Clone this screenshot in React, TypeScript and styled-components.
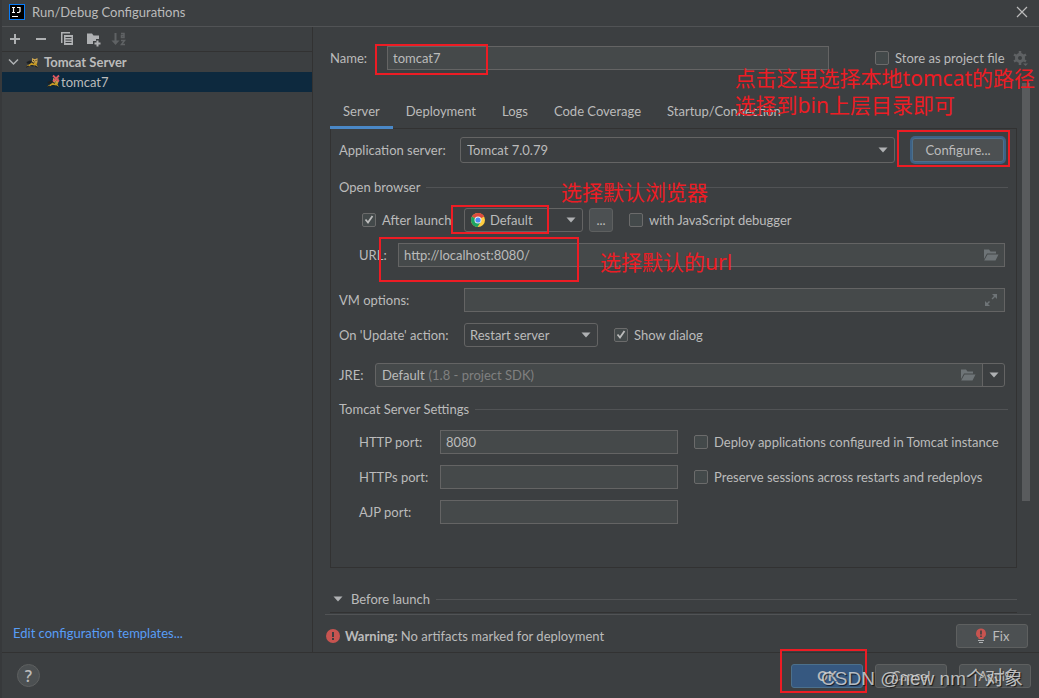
import React from "react";
import styled, { createGlobalStyle } from "styled-components";

const FONT = `Lato, "Noto Sans CJK SC", sans-serif`;
const c = {
  bg: "#3c3f41",
  dark: "#323232",
  line: "#515355",
  field: "#45494a",
  border: "#646464",
  text: "#bbbbbb",
  icon: "#afb1b3",
  red: "#ed1c24",
};

const GlobalStyle = createGlobalStyle`
  *, *::before, *::after { box-sizing: border-box; }
  body { margin: 0; background: ${c.bg}; }
  body, button, input, select { font-family: ${FONT}; font-size: 13px; line-height: 18px; color: ${c.text}; }
`;

const Dialog = styled.div`
  display: flex;
  flex-direction: column;
  min-height: 100vh;
  background: ${c.bg};
  border-left: 2px solid #37393b;
  border-bottom: 1px solid #2f2b2d;
`;
const TitleBar = styled.header`
  display: flex;
  align-items: center;
  gap: 7px;
  height: 27px;
  padding: 0 9px 2px 7px;
  border-bottom: 1px solid #515355;
`;
const Title = styled.h1`
  flex: 1;
  margin: 0;
  font-size: 13px;
  font-weight: 400;
`;
const IconButton = styled.button<{ $dim?: boolean }>`
  display: flex;
  align-items: center;
  justify-content: center;
  width: 16px;
  height: 16px;
  padding: 0;
  border: 0;
  background: none;
  color: ${(p) => (p.$dim ? "#5f6264" : c.icon)};
`;
const Body = styled.div`
  display: grid;
  grid-template-columns: 311px minmax(0, 1fr);
  flex: 1;
`;
const Sidebar = styled.aside`
  display: flex;
  flex-direction: column;
  border-right: 1px solid ${c.dark};
`;
const Toolbar = styled.div`
  display: flex;
  align-items: center;
  gap: 10px;
  height: 25px;
  padding: 0 5px;
  border-bottom: 1px solid ${c.dark};
`;
const Tree = styled.ul`
  flex: 1;
  margin: 0;
  padding: 0;
  list-style: none;
`;
const TreeRow = styled.li<{ $depth: number; $selected?: boolean }>`
  display: flex;
  align-items: center;
  height: 20px;
  padding-left: ${(p) => (p.$depth ? 43 : 5)}px;
  padding-bottom: 1px;
  gap: ${(p) => (p.$depth ? 0 : 4)}px;
  font-weight: ${(p) => (p.$depth ? 400 : 700)};
  background: ${(p) => (p.$selected ? "#0d293e" : "transparent")};
`;
const TemplatesLink = styled.a`
  padding: 0 0 10px 11px;
  color: #589df6;
  text-decoration: none;
`;

const Main = styled.main`
  display: flex;
  flex-direction: column;
`;
const NameRow = styled.div`
  position: relative;
  display: flex;
  align-items: center;
  padding: 19px 11px 0 17px;
`;
const Label = styled.label<{ $w: number }>`
  flex: none;
  width: ${(p) => p.$w}px;
  white-space: nowrap;
`;
const Anchor = styled.div<{ $w?: number }>`
  position: relative;
  display: flex;
  flex: ${(p) => (p.$w ? `0 0 ${p.$w}px` : "1 1 0")};
  min-width: 0;
`;
const TextInput = styled.input`
  flex: 1;
  width: 100%;
  min-width: 0;
  height: 24px;
  padding: 0 5px 1px;
  border: 1px solid ${c.border};
  border-radius: 0;
  background: ${c.field};
  outline: 0;
`;
const FieldIcon = styled.span<{ $right: number }>`
  position: absolute;
  right: ${(p) => p.$right}px;
  top: 0;
  bottom: 0;
  display: flex;
  align-items: center;
  pointer-events: none;
  color: #6e7477;
`;
const Check = styled.label<{ $w?: number; $before?: number }>`
  display: flex;
  align-items: center;
  flex: none;
  gap: 6px;
  width: ${(p) => (p.$w ? `${p.$w}px` : "auto")};
  margin-left: ${(p) => p.$before || 0}px;
  white-space: nowrap;
`;
const CheckInput = styled.input`
  appearance: none;
  flex: none;
  width: 14px;
  height: 14px;
  margin: 0;
  border: 1px solid #6b6b6b;
  border-radius: 2px;
  background: #43494a;
  &:checked {
    background: #43494a
      url("data:image/svg+xml,%3Csvg xmlns='http://www.w3.org/2000/svg' viewBox='0 0 12 12'%3E%3Cpath d='M2.5 5.5L5 8.5L9.5 2' fill='none' stroke='%23bbbbbb' stroke-width='1.8'/%3E%3C/svg%3E")
      center / 12px 12px no-repeat;
  }
`;
const Scroller = styled.div`
  display: flex;
  padding: 0 9px 0 17px;
  gap: 5px;
  flex: 1;
`;
const Content = styled.div`
  flex: 1;
  min-width: 0;
  border-bottom: 1px solid ${c.dark};
`;
const Track = styled.div`
  display: flex;
  flex-direction: column;
  width: 8px;
  padding-top: 13px;
  &::before { content: ""; flex: 418; background: #595b5d; }
  &::after { content: ""; flex: 112; }
`;
const Tabs = styled.div`
  display: flex;
  margin-top: 27px;
  box-shadow: inset 0 -1px 0 ${c.dark};
`;
const Tab = styled.button<{ $active?: boolean }>`
  height: 32px;
  padding: 0 13px 1px;
  border: 0;
  border-bottom: 3px solid ${(p) => (p.$active ? "#4a88c7" : "transparent")};
  background: none;
  white-space: nowrap;
`;
const Panel = styled.section`
  padding: 8px 8px 43px;
  border: solid ${c.dark};
  border-width: 0 1px 1px;
`;
const Row = styled.div<{ $top: number; $indent?: number }>`
  display: flex;
  align-items: center;
  margin-top: ${(p) => p.$top}px;
  padding: 0 3px 0 ${(p) => p.$indent || 0}px;
`;
const SectionTitle = styled.h2<{ $top: number }>`
  display: flex;
  align-items: center;
  gap: 6px;
  margin: ${(p) => p.$top}px 0 0;
  font-size: 13px;
  font-weight: 400;
  white-space: nowrap;
  &::after { content: ""; flex: 1; height: 1px; background: ${c.line}; }
`;
const Select = styled.select<{ $h?: number; $pad?: number }>`
  appearance: none;
  flex: 1;
  width: 100%;
  min-width: 0;
  height: ${(p) => p.$h || 24}px;
  padding: 0 24px 0 ${(p) => p.$pad || 5}px;
  border: 1px solid ${c.border};
  border-radius: 3px;
  background: ${c.bg};
  outline: 0;
`;
const Combo = styled.div`
  position: relative;
  display: flex;
  flex: 1;
  height: 24px;
  border: 1px solid ${c.border};
  border-radius: 3px;
  background: ${c.field};
`;
const ComboText = styled.button`
  display: flex;
  flex: 1;
  gap: 4px;
  align-items: center;
  padding: 0 6px 1px;
  border: 0;
  background: none;
  color: ${c.text};
  span { color: #808080; }
`;
const ComboArrow = styled.button`
  display: flex;
  align-items: center;
  justify-content: center;
  width: 22px;
  padding: 0;
  border: 0;
  border-left: 1px solid ${c.border};
  border-radius: 0 3px 3px 0;
  background: ${c.bg};
`;
const Button = styled.button<{ $w: number; $kind?: "primary" | "focus" }>`
  display: flex;
  align-items: center;
  justify-content: center;
  gap: 6px;
  flex: none;
  width: ${(p) => p.$w}px;
  height: 24px;
  padding: 0;
  border: 1px solid ${(p) => (p.$kind ? "#4c708c" : "#5e6060")};
  border-radius: 3px;
  background: ${(p) => (p.$kind === "primary" ? "#365880" : "#4c5052")};
  box-shadow: ${(p) => (p.$kind === "focus" ? "0 0 0 2px #3d6185" : "none")};
  font-weight: ${(p) => (p.$kind === "primary" ? 700 : 400)};
`;
const MoreButton = styled(Button)`
  margin: 0 16px 0 6px;
`;
const ConfigureSlot = styled(Anchor)`
  justify-content: flex-end;
  padding-right: 1px;
`;
const BeforeLaunch = styled.div`
  display: flex;
  align-items: center;
  gap: 8px;
  padding: 22px 0 4px 3px;
  h2 { flex: 1; margin-top: 0; }
`;
const Warning = styled.div`
  display: flex;
  align-items: center;
  gap: 5px;
  height: 38px;
  margin: 1px 8px 0 12px;
  padding: 5px 3px 0 1px;
  border-top: 1px solid ${c.line};
  p { flex: 1; margin: 0; }
`;
const Footer = styled.footer`
  position: relative;
  display: flex;
  align-items: center;
  gap: 12px;
  height: 46px;
  padding: 0 8px 0 15px;
  border-top: 1px solid ${c.dark};
`;
const HelpButton = styled.button`
  width: 23px;
  height: 23px;
  margin-right: auto;
  padding: 0;
  border: 1px solid #5e6060;
  border-radius: 50%;
  background: #4c5052;
  font-family: "Open Sans", sans-serif;
  font-size: 16px;
  font-weight: 600;
  line-height: 20px;
`;
const Mark = styled.span<{ $x: number; $y: number; $w: number; $h: number }>`
  position: absolute;
  z-index: 2;
  left: ${(p) => p.$x}px;
  top: ${(p) => p.$y}px;
  width: ${(p) => p.$w}px;
  height: ${(p) => p.$h}px;
  border: 2px solid ${c.red};
  pointer-events: none;
`;
const Note = styled.span<{ $x?: number; $right?: number; $y: number }>`
  position: absolute;
  z-index: 2;
  left: ${(p) => (p.$x === undefined ? "auto" : `${p.$x}px`)};
  right: ${(p) => (p.$right === undefined ? "auto" : `${p.$right}px`)};
  top: ${(p) => p.$y}px;
  font-family: "Noto Sans", "Noto Sans CJK SC", sans-serif;
  font-size: 21px;
  line-height: 27px;
  color: ${c.red};
  white-space: nowrap;
  pointer-events: none;
`;
const Watermark = styled.span`
  position: absolute;
  z-index: 3;
  right: 16px;
  top: 12px;
  font-family: "Liberation Sans", "Noto Sans CJK SC", sans-serif;
  font-size: 19px;
  line-height: 28px;
  color: rgba(225, 225, 225, 0.8);
  text-shadow: 1px 1px 1px rgba(0, 0, 0, 0.7);
  white-space: nowrap;
  pointer-events: none;
`;

const Arrow = () => (
  <svg width="10" height="6" viewBox="0 0 10 6"><path d="M0.5 0.5h9L5 5.5z" fill="#afb1b3" /></svg>
);
const Folder = () => (
  <svg width="16" height="12" viewBox="0 0 16 12" fill="currentColor">
    <path d="M1 0.500h5l1.500 2H13v2H4L1 10z" /><path d="M4.500 5.500H15.500L12.500 11.500H1.200z" />
  </svg>
);
const Cat = ({ error }: { error?: boolean }) => (
  <svg width="16" height="16" viewBox="0 0 16 16">
    <path d="M2.500 8L6 6.500 8 7.500 6 10 3 9.500z" fill="#1d2023" />
    <path d="M2 12.500L5 10.500 8 8.500l3-1 2.500 1-1 2 1.500 2.500-2.500-1.500-3-0.500-3 1z" fill="#c99b22" />
    <path d="M8 4l2 1h1.500L13.500 4v4L12 9H9.500L8 7.500z" fill="#c9a452" />
    <path d="M6.500 11.500l3 0.500M2 13.200l3-1.200M11 12l2.500 1.300M8 8.500l2 0.800" stroke="#1d2023" strokeWidth="1" />
    <path d="M9 6.500h1M11.500 6.500h1M10.200 8h1" stroke="#54421a" strokeWidth="1" />
    {error && <path d="M8 1.500l6 6M14 1.500l-6 6" stroke="#db5860" strokeWidth="1.800" />}
  </svg>
);
const Chrome = () => (
  <svg width="14" height="14" viewBox="0 0 14 14">
    <circle cx="7" cy="7" r="7" fill="#ffcd40" />
    <path d="M7 7L0.940 3.500A7 7 0 0 1 13.060 3.500z" fill="#dd4b3e" />
    <path d="M7 3.500h6.060A7 7 0 0 0 7 0z" fill="#dd4b3e" />
    <path d="M0.940 3.500A7 7 0 0 0 6.500 14L10 8.700 7 7z" fill="#1da462" />
    <circle cx="7" cy="7" r="3.500" fill="#f1f1f1" />
    <circle cx="7" cy="7" r="2.600" fill="#4c8bf5" />
  </svg>
);

const ports = [
  { id: "http", label: "HTTP port:", value: "8080", check: "Deploy applications configured in Tomcat instance" },
  { id: "https", label: "HTTPs port:", value: "", check: "Preserve sessions across restarts and redeploys" },
  { id: "ajp", label: "AJP port:", value: "", check: "" },
];

export default function App() {
  return (
    <Dialog role="dialog" aria-label="Run/Debug Configurations">
      <GlobalStyle />
      <TitleBar>
        <svg width="16" height="16" viewBox="0 0 16 16">
          <rect x="0.500" y="0.500" width="15" height="15" fill="#000" stroke="#087cfa" />
          <path d="M3 3.500h3M4.500 3.500v5M3 8.500h3M8 3.500h3v4l-1 1H8" fill="none" stroke="#fff" strokeWidth="1.200" />
          <path d="M3 12.500h6" stroke="#fff" />
        </svg>
        <Title>Run/Debug Configurations</Title>
        <IconButton aria-label="Close">
          <svg width="12" height="12" viewBox="0 0 12 12"><path d="M1 1l10 10M11 1L1 11" stroke="#bbb" strokeWidth="1.200" /></svg>
        </IconButton>
      </TitleBar>
      <Body>
        <Sidebar>
          <Toolbar>
            <IconButton aria-label="Add">
              <svg width="16" height="16" viewBox="0 0 16 16" stroke="currentColor" strokeWidth="2"><path d="M8 3v10M3 8h10" /></svg>
            </IconButton>
            <IconButton aria-label="Remove">
              <svg width="16" height="16" viewBox="0 0 16 16" stroke="currentColor" strokeWidth="2"><path d="M3 8h10" /></svg>
            </IconButton>
            <IconButton aria-label="Copy">
              <svg width="16" height="16" viewBox="0 0 16 16">
                <path d="M2 1h9v1.500H3.500V12H2z" fill="currentColor" /><path d="M5 4h9v10H5z" fill="currentColor" />
                <path d="M6.500 6.500h6M6.500 9h6M6.500 11.500h6" stroke="#3c3f41" />
              </svg>
            </IconButton>
            <IconButton aria-label="New folder">
              <svg width="16" height="16" viewBox="0 0 16 16">
                <path d="M2 2.500h5l1.500 2H14V8h-3v2H8v3H2z" fill="currentColor" />
                <path d="M12.500 9.500v6M9.500 12.500h6" stroke="currentColor" strokeWidth="2" />
              </svg>
            </IconButton>
            <IconButton aria-label="Sort configurations" $dim>
              <svg width="16" height="16" viewBox="0 0 16 16" fill="none" stroke="currentColor" strokeWidth="1.500">
                <path d="M4.500 2v9" strokeWidth="2" /><path d="M0.500 9.500h8L4.500 14z" fill="currentColor" stroke="none" />
                <path d="M10 2.500h3v4h-2.500v-2H13M10 9.500h3.500L10.500 13.500H14" />
              </svg>
            </IconButton>
          </Toolbar>
          <Tree>
            <TreeRow $depth={0}>
              <svg width="13" height="10" viewBox="0 0 13 10"><path d="M2 2.500l4.500 4.500L11 2.500" fill="none" stroke="#afb1b3" strokeWidth="1.500" /></svg>
              <Cat />
              Tomcat Server
            </TreeRow>
            <TreeRow $depth={1} $selected>
              <Cat error />
              tomcat7
            </TreeRow>
          </Tree>
          <TemplatesLink href="#templates">Edit configuration templates...</TemplatesLink>
        </Sidebar>

        <Main>
          <NameRow>
            <Label $w={57} htmlFor="name">Name:</Label>
            <Anchor>
              <TextInput id="name" defaultValue="tomcat7" />
              <Mark $x={-12} $y={-2} $w={113} $h={31} />
            </Anchor>
            <Check $w={137} $before={46}>
              <CheckInput type="checkbox" />
              Store as project file
            </Check>
            <IconButton aria-label="Storage options" $dim>
              <svg width="16" height="16" viewBox="0 0 16 16">
                <circle cx="8" cy="8" r="3.500" fill="none" stroke="currentColor" strokeWidth="3" />
                <path d="M8 1v14M2 4.500l12 7M14 4.500l-12 7" stroke="currentColor" strokeWidth="2.500" />
                <circle cx="8" cy="8" r="2" fill="#3c3f41" />
                <path d="M11 13.500h5L13.500 16z" fill="currentColor" />
              </svg>
            </IconButton>
            <Note $right={4} $y={38}>
              点击这里选择本地tomcat的路径
              <br />
              选择到bin上层目录即可
            </Note>
          </NameRow>
          <Scroller>
            <Content>
              <Tabs role="tablist">
                <Tab role="tab" $active aria-selected>Server</Tab>
                <Tab role="tab">Deployment</Tab>
                <Tab role="tab">Logs</Tab>
                <Tab role="tab">Code Coverage</Tab>
                <Tab role="tab">Startup/Connection</Tab>
              </Tabs>
              <Panel>
                <Row $top={0}>
                  <Label $w={121} htmlFor="server">Application server:</Label>
                  <Anchor>
                    <Select id="server" $h={26} $pad={6}><option>Tomcat 7.0.79</option></Select>
                    <FieldIcon $right={7}><Arrow /></FieldIcon>
                  </Anchor>
                  <ConfigureSlot $w={110}>
                    <Button $w={92} $kind="focus">Configure...</Button>
                    <Mark $x={2} $y={-8} $w={113} $h={37} />
                  </ConfigureSlot>
                </Row>
                <SectionTitle $top={15}>Open browser</SectionTitle>
                <Row $top={12} $indent={23}>
                  <Check $w={102}>
                    <CheckInput type="checkbox" defaultChecked />
                    After launch
                  </Check>
                  <Anchor $w={119}>
                    <Select aria-label="Browser" $pad={25}><option>Default</option></Select>
                    <FieldIcon $right={98}><Chrome /></FieldIcon>
                    <FieldIcon $right={7}><Arrow /></FieldIcon>
                    <Mark $x={-13} $y={-3} $w={98} $h={29} />
                    <Note $x={97} $y={-29}>选择默认浏览器</Note>
                  </Anchor>
                  <MoreButton $w={24}>...</MoreButton>
                  <Check>
                    <CheckInput type="checkbox" />
                    with JavaScript debugger
                  </Check>
                </Row>
                <Row $top={11} $indent={20}>
                  <Label $w={39} htmlFor="url">URL:</Label>
                  <Anchor>
                    <TextInput id="url" defaultValue="http://localhost:8080/" />
                    <FieldIcon $right={6}><Folder /></FieldIcon>
                    <Mark $x={-19} $y={-6} $w={200} $h={45} />
                    <Note $x={202} $y={6}>选择默认的url</Note>
                  </Anchor>
                </Row>
                <Row $top={21}>
                  <Label $w={125} htmlFor="vm">VM options:</Label>
                  <Anchor>
                    <TextInput id="vm" />
                    <FieldIcon $right={7}>
                      <svg width="14" height="14" viewBox="0 0 14 14" fill="currentColor">
                        <path d="M8 1h5v5l-2-2-2.500 2.500-1-1L10 3zM1 8v5h5l-2-2 2-2-1-1-2 2z" />
                      </svg>
                    </FieldIcon>
                  </Anchor>
                </Row>
                <Row $top={11}>
                  <Label $w={125} htmlFor="update">On 'Update' action:</Label>
                  <Anchor $w={134}>
                    <Select id="update"><option>Restart server</option></Select>
                    <FieldIcon $right={7}><Arrow /></FieldIcon>
                  </Anchor>
                  <Check $before={16}>
                    <CheckInput type="checkbox" defaultChecked />
                    Show dialog
                  </Check>
                </Row>
                <Row $top={16}>
                  <Label $w={36} htmlFor="jre">JRE:</Label>
                  <Combo>
                    <ComboText id="jre">Default <span>(1.8 - project SDK)</span></ComboText>
                    <FieldIcon $right={28}><Folder /></FieldIcon>
                    <ComboArrow aria-label="Choose JRE"><Arrow /></ComboArrow>
                  </Combo>
                </Row>
                <SectionTitle $top={13}>Tomcat Server Settings</SectionTitle>
                {ports.map((p, i) => (
                  <Row key={p.id} $top={i ? 11 : 12} $indent={20}>
                    <Label $w={81} htmlFor={p.id}>{p.label}</Label>
                    <Anchor $w={238}><TextInput id={p.id} defaultValue={p.value} /></Anchor>
                    {p.check && (
                      <Check $before={16}>
                        <CheckInput type="checkbox" />
                        {p.check}
                      </Check>
                    )}
                  </Row>
                ))}
              </Panel>
              <BeforeLaunch>
                <Arrow />
                <SectionTitle $top={0}>Before launch</SectionTitle>
              </BeforeLaunch>
            </Content>
            <Track />
          </Scroller>
          <Warning>
            <svg width="14" height="14" viewBox="0 0 14 14">
              <circle cx="7" cy="7" r="7" fill="#c75450" /><path d="M6 3h2v5H6zM6 9h2v2H6z" fill="#3c3f41" />
            </svg>
            <p><b>Warning:</b> No artifacts marked for deployment</p>
            <Button $w={72}>
              <svg width="12" height="16" viewBox="0 0 12 16">
                <path d="M6 0.500a5 5 0 0 1 2.500 9.300V11h-5V9.800A5 5 0 0 1 6 0.500z" fill="#c75450" />
                <path d="M5.200 2.500h1.600v4H5.200zM5.200 7.500h1.600v1.600H5.200z" fill="#3c3f41" />
                <path d="M3 12.500h6M4 14.500h4" stroke="#afb1b3" />
              </svg>
              Fix
            </Button>
          </Warning>
        </Main>
      </Body>
      <Footer>
        <HelpButton aria-label="Help">?</HelpButton>
        <Anchor $w={72}>
          <Button $w={72} $kind="primary">OK</Button>
          <Mark $x={-11} $y={-15} $w={87} $h={44} />
        </Anchor>
        <Button $w={72}>Cancel</Button>
        <Button $w={72}>Apply</Button>
        <Watermark>CSDN @new nm个对象</Watermark>
      </Footer>
    </Dialog>
  );
}
